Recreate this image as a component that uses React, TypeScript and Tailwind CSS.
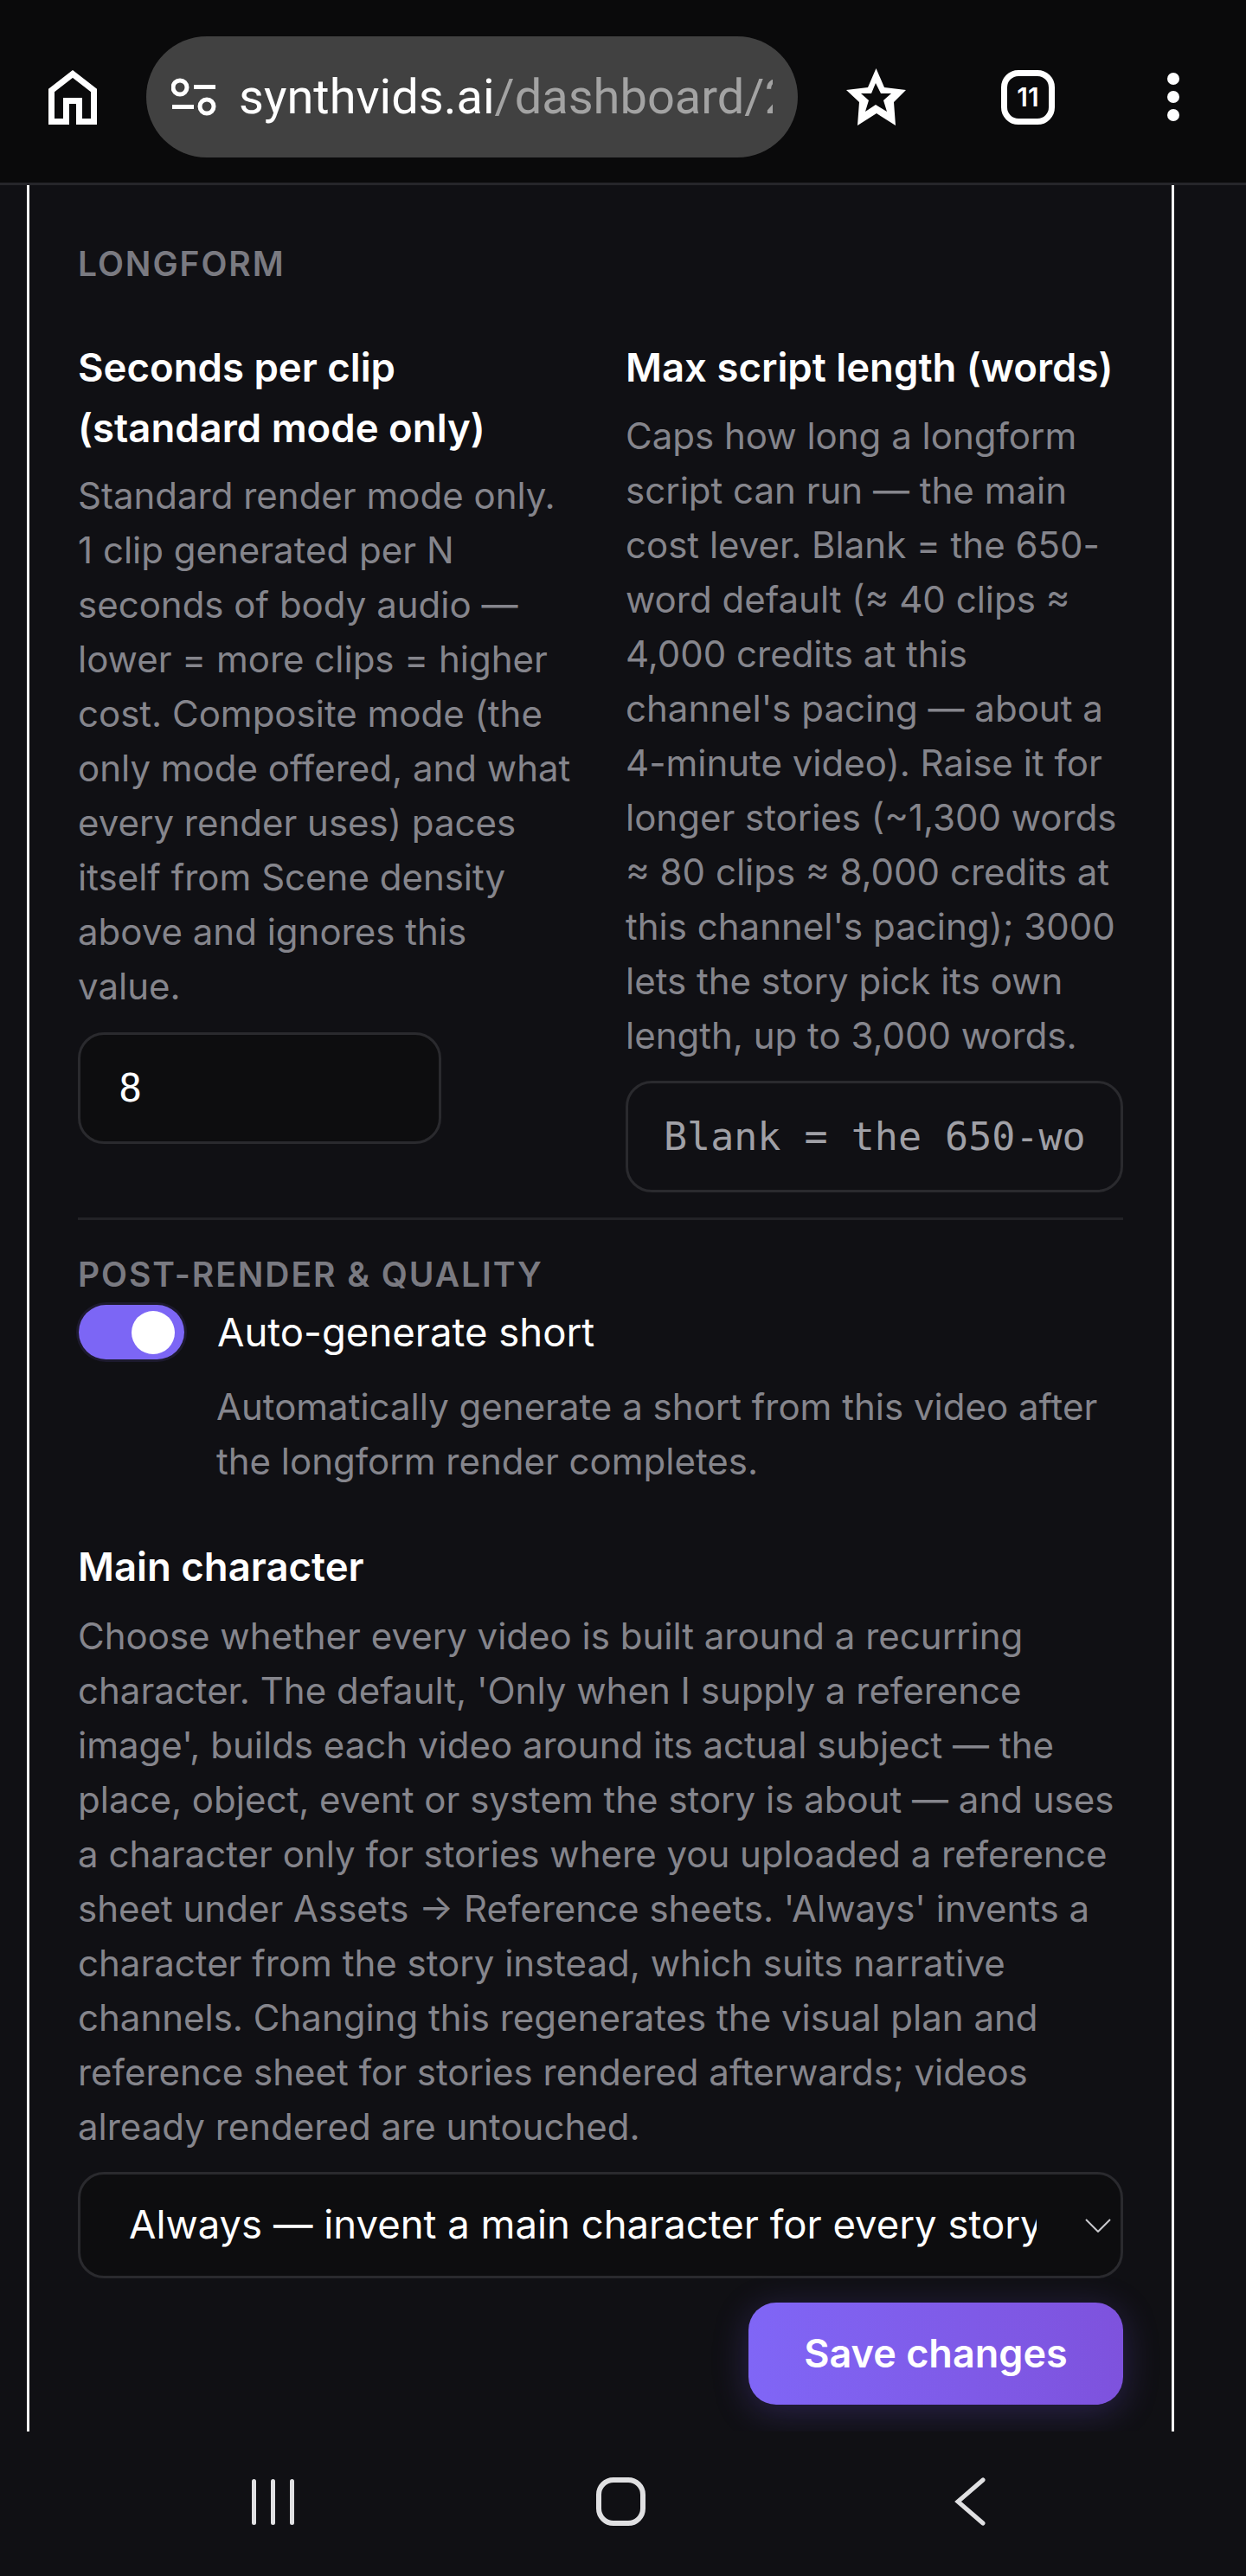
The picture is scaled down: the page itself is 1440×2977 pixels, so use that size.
const inter = "font-['Inter',sans-serif]";

function HomeIcon() {
  return (
    <svg width="56" height="63" viewBox="0 0 56 63" fill="none" stroke="white" strokeWidth="7" strokeLinejoin="miter">
      <path d="M3.5 59.5V23.5L28 4.5L52.5 23.5V59.5H35.5V35.5H20.5V59.5Z" />
    </svg>
  );
}

function TuneIcon() {
  return (
    <svg width="52" height="44" viewBox="0 0 52 44" fill="none" stroke="white" strokeWidth="5">
      <circle cx="10" cy="11" r="8" />
      <path d="M26 10.5H51M1 33.5H26" />
      <circle cx="41" cy="33" r="8" />
    </svg>
  );
}

function StarIcon() {
  return (
    <svg width="69" height="66" viewBox="0 0 69 66" fill="white" fillRule="evenodd">
      <path d="M34.5 0L44 22L69 25L55 39L57 66L35 52L13 66L15 39L0 25L25 22ZM34 17L29 29H17L26 37L22 50L34 42L47 50L43 37L52 29H40Z" />
    </svg>
  );
}

function Body({ children, className = "" }: { children: React.ReactNode; className?: string }) {
  return <p className={`text-[42px] leading-[63px] text-[#85858c] ${className}`}>{children}</p>;
}

function Title({ children }: { children: React.ReactNode }) {
  return <h3 className="text-[45.5px] leading-[70px] font-semibold text-white">{children}</h3>;
}

function SectionLabel({ children }: { children: React.ReactNode }) {
  return <div className="text-[39px] leading-[48px] font-semibold tracking-[1.95px] text-[#7a7a81]">{children}</div>;
}

export default function App() {
  return (
    <div className={`${inter} flex h-[2977px] w-[1440px] flex-col overflow-hidden bg-[#101014]`}>
      <header className="flex h-[214px] shrink-0 items-center border-b-[3px] border-[#26262a] bg-[#0a0a0b] pt-[13px] pl-[56px]">
        <HomeIcon />
        <div className="ml-[57px] flex h-[140px] w-[753px] shrink-0 items-center gap-[26px] overflow-hidden rounded-[70px] bg-[#414141] pl-[29px]">
          <TuneIcon />
          <div className="w-[617px] overflow-hidden whitespace-nowrap font-['Roboto',sans-serif] text-[56px] leading-[72px] text-white">
            synthvids.ai<span className="text-[#a3a3a3]">/dashboard/2</span>
          </div>
        </div>
        <div className="ml-[56px]">
          <StarIcon />
        </div>
        <div className="ml-[110px] flex h-[63px] w-[62px] items-center justify-center rounded-[20px] border-[7px] border-white text-[30px] font-semibold text-white">
          11
        </div>
        <div className="ml-[130px] flex flex-col gap-[7px]">
          <span className="h-[14px] w-[14px] rounded-full bg-white" />
          <span className="h-[14px] w-[14px] rounded-full bg-white" />
          <span className="h-[14px] w-[14px] rounded-full bg-white" />
        </div>
      </header>

      <main className="ml-[31px] w-[1326px] flex-1 overflow-hidden border-x-[3px] border-white px-[56px] pt-[67px]">
        <SectionLabel>LONGFORM</SectionLabel>

        <div className="mt-[61px] grid grid-cols-2 gap-x-[58px]">
          <div>
            <Title>
              Seconds per clip
              <br />
              (standard mode only)
            </Title>
            <Body className="mt-[11px]">
              Standard render mode only. 1 clip generated per N seconds of body audio — lower = more clips = higher cost. Composite mode (the only mode offered, and what every render uses) paces itself from Scene density above and ignores this value.
            </Body>
            <div className="mt-[22px] flex h-[129px] w-[420px] items-center rounded-[30px] border-[3px] border-[#2a2a2e] bg-[#0d0d0f] pl-[44px] font-['DejaVu_Sans_Mono',monospace] text-[45px] text-white">
              8
            </div>
          </div>
          <div>
            <Title>Max script length (words)</Title>
            <Body className="mt-[12px]">
              Caps how long a longform script can run — the main cost lever. Blank = the 650-word default (≈ 40 clips ≈ 4,000 credits at this channel's pacing — about a 4-minute video). Raise it for longer stories (~1,300 words ≈ 80 clips ≈ 8,000 credits at this channel's pacing); 3000 lets the story pick its own length, up to 3,000 words.
            </Body>
            <div className="mt-[21px] flex h-[129px] w-full items-center overflow-hidden rounded-[30px] border-[3px] border-[#2a2a2e] bg-[#101014] pl-[41px] font-['DejaVu_Sans_Mono',monospace] text-[45px] text-[#a0a0a6]">
              <span className="w-[488px] overflow-hidden whitespace-nowrap">Blank = the 650-word default</span>
            </div>
          </div>
        </div>

        <div className="mt-[29px] border-t-[3px] border-[#222226] pt-[39px]">
          <SectionLabel>POST-RENDER &amp; QUALITY</SectionLabel>
          <div className="mt-[11px] flex items-center gap-[38px]">
            <span className="ml-[1px] flex h-[63px] w-[122px] items-center justify-end rounded-full bg-[#7c66f5] pr-[11px] ring-[3px] ring-[#1d1a2e]">
              <span className="h-[50px] w-[50px] rounded-full bg-white" />
            </span>
            <span className="text-[45.5px] leading-[63px] text-white">Auto-generate short</span>
          </div>
          <Body className="mt-[23px] ml-[160px]">
            Automatically generate a short from this video after the longform render completes.
          </Body>
        </div>

        <div className="mt-[56px]">
          <Title>Main character</Title>
          <Body className="mt-[13px]">
            Choose whether every video is built around a recurring character. The default, 'Only when I supply a reference image', builds each video around its actual subject — the place, object, event or system the story is about — and uses a character only for stories where you uploaded a reference sheet under Assets → Reference sheets. 'Always' invents a character from the story instead, which suits narrative channels. Changing this regenerates the visual plan and reference sheet for stories rendered afterwards; videos already rendered are untouched.
          </Body>
          <div className="mt-[21px] flex h-[123px] items-center rounded-[30px] border-[3px] border-[#2a2a2e] bg-[#0d0d0f] pl-[56px] pr-[11px]">
            <span className="w-[1049px] overflow-hidden whitespace-nowrap text-[45.5px] text-white">
              Always — invent a main character for every story
            </span>
            <svg className="ml-auto" width="30" height="16" viewBox="0 0 30 16" fill="none" stroke="#c8c8cc" strokeWidth="2">
              <path d="M1 1L15 15L29 1" />
            </svg>
          </div>
        </div>

        <div className="mt-[28px] flex justify-end">
          <button className="h-[118px] w-[433px] rounded-[32px] bg-gradient-to-r from-[#8066f6] to-[#7e52dd] text-[45px] font-semibold text-white shadow-[0_8px_40px_rgba(124,92,246,0.25)]">
            Save changes
          </button>
        </div>
      </main>

      <footer className="flex h-[167px] shrink-0 items-center bg-[#101014] pb-[5px] pl-[291px]">
        <div className="flex gap-[17px]">
          <span className="h-[53px] w-[5px] rounded-full bg-[#e0e0e2]" />
          <span className="h-[53px] w-[5px] rounded-full bg-[#e0e0e2]" />
          <span className="h-[53px] w-[5px] rounded-full bg-[#e0e0e2]" />
        </div>
        <span className="ml-[349px] h-[56px] w-[57px] rounded-[20px] border-[6px] border-[#e0e0e2]" />
        <svg className="ml-[356px]" width="37" height="56" viewBox="0 0 37 56" fill="none" stroke="#e0e0e2" strokeWidth="5" strokeLinecap="round">
          <path d="M34 3L5 28L34 53" />
        </svg>
      </footer>
    </div>
  );
}
